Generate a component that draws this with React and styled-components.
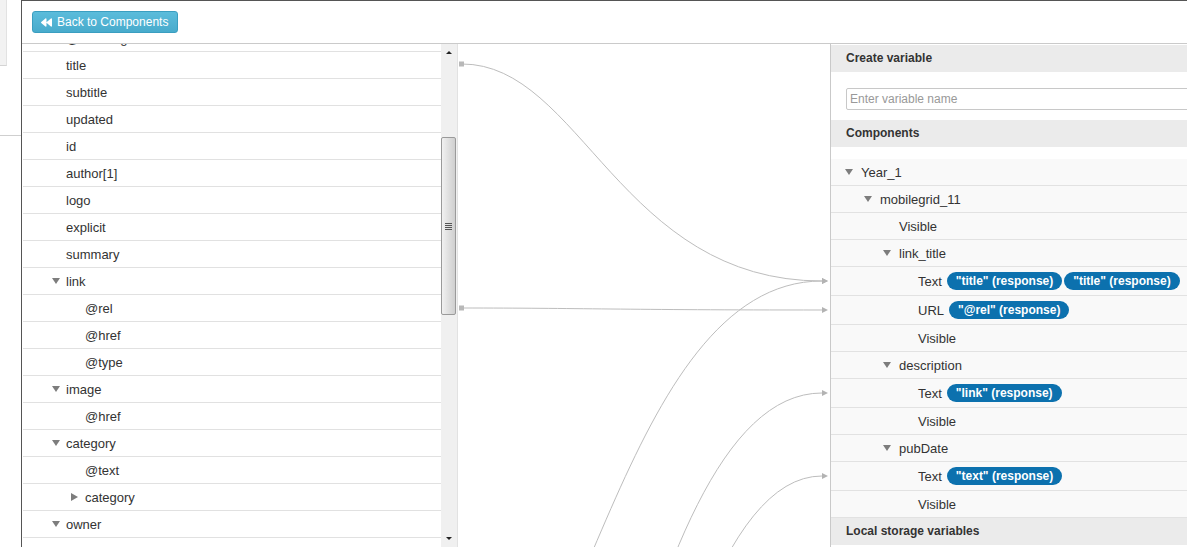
import React from 'react';
import styled, { createGlobalStyle } from 'styled-components';
import { FaBackward } from 'react-icons/fa';

const GlobalStyle = createGlobalStyle`
  html, body {
    margin: 0;
    padding: 0;
    background: #fff;
  }
  body {
    font-family: 'Liberation Sans', Arial, sans-serif;
    color: #333;
  }
  * { box-sizing: border-box; }
`;

const sourceRows = [
  { label: '@xml:lang', depth: 0 },
  { label: 'title', depth: 0 },
  { label: 'subtitle', depth: 0 },
  { label: 'updated', depth: 0 },
  { label: 'id', depth: 0 },
  { label: 'author[1]', depth: 0 },
  { label: 'logo', depth: 0 },
  { label: 'explicit', depth: 0 },
  { label: 'summary', depth: 0 },
  { label: 'link', depth: 0, toggle: 'down' },
  { label: '@rel', depth: 1 },
  { label: '@href', depth: 1 },
  { label: '@type', depth: 1 },
  { label: 'image', depth: 0, toggle: 'down' },
  { label: '@href', depth: 1 },
  { label: 'category', depth: 0, toggle: 'down' },
  { label: '@text', depth: 1 },
  { label: 'category', depth: 1, toggle: 'right' },
  { label: 'owner', depth: 0, toggle: 'down' },
  { label: 'name', depth: 1 },
];

const componentRows = [
  { label: 'Year_1', depth: 0, toggle: 'down' },
  { label: 'mobilegrid_11', depth: 1, toggle: 'down' },
  { label: 'Visible', depth: 2 },
  { label: 'link_title', depth: 2, toggle: 'down' },
  { label: 'Text', depth: 3, pills: ['"title" (response)', '"title" (response)'] },
  { label: 'URL', depth: 3, pills: ['"@rel" (response)'] },
  { label: 'Visible', depth: 3 },
  { label: 'description', depth: 2, toggle: 'down' },
  { label: 'Text', depth: 3, pills: ['"link" (response)'] },
  { label: 'Visible', depth: 3 },
  { label: 'pubDate', depth: 2, toggle: 'down' },
  { label: 'Text', depth: 3, pills: ['"text" (response)'] },
  { label: 'Visible', depth: 3 },
];

// connections in canvas coordinates (source y -> target y)
const links = [
  { from: 20, to: 237, marker: true },
  { from: 264, to: 266, marker: true },
  { from: 692, to: 237 },
  { from: 1064, to: 349 },
  { from: 1360, to: 432 },
];

const X0 = 4;
const X1 = 364;

const linkPath = (a, b) => {
  const dx = X1 - X0;
  const c1 = X0 + dx * 0.33;
  const c2 = X0 + dx * 0.44;
  return `M${X0} ${a} C${c1} ${a}, ${c2} ${b}, ${X1} ${b}`;
};

const Page = styled.div`
  display: flex;
  width: 1187px;
  height: 547px;
  overflow: hidden;
`;

const Backdrop = styled.div`
  flex: none;
  width: 21px;
  display: flex;
  flex-direction: column;
`;

const BackdropBlock = styled.div`
  width: 7px;
  height: 66px;
  background: #f2f2f2;
  border-right: 1px solid #e2e2e2;
  border-bottom: 1px solid #d4d4d4;
`;

const BackdropRule = styled.div`
  margin-top: 69px;
  border-top: 1px solid #cfcfcf;
`;

const Modal = styled.div`
  flex: none;
  width: 1209px;
  display: flex;
  flex-direction: column;
  border-left: 1px solid #555;
  border-top: 1px solid #555;
`;

const Header = styled.div`
  height: 42px;
  padding: 10px 0 0 10px;
  flex: none;
`;

const BackButton = styled.button`
  display: inline-flex;
  align-items: center;
  gap: 5px;
  height: 22px;
  width: 146px;
  padding: 0 0 0 8px;
  border: 1px solid #3a9ec0;
  border-radius: 3px;
  background: linear-gradient(#5bbcdb, #48abcc);
  color: #fff;
  font-family: 'Liberation Sans', Arial, sans-serif;
  font-size: 12px;
  cursor: pointer;
  svg {
    font-size: 11px;
  }
`;

const Body = styled.div`
  flex: 1;
  min-height: 0;
  display: flex;
  border-top: 1px solid #cacaca;
`;

const ListPane = styled.div`
  flex: none;
  width: 419px;
  overflow: hidden;
`;

const List = styled.div`
  margin-top: -19px;
`;

const ListRow = styled.div`
  display: flex;
  align-items: center;
  height: 27px;
  margin-left: 1px;
  padding-left: ${(p) => 29 + p.$depth * 19}px;
  border-bottom: 1px solid #e1e1e1;
  font-size: 13px;
  color: #333;
`;

const ToggleSlot = styled.span`
  flex: none;
  width: ${(p) => p.$w}px;
  display: flex;
  align-items: center;
`;

const Caret = styled.span`
  width: 0;
  height: 0;
  ${(p) =>
    p.$dir === 'right'
      ? `border-top: 4px solid transparent; border-bottom: 4px solid transparent; border-left: 7px solid #7d7d7d;`
      : `border-left: 4px solid transparent; border-right: 4px solid transparent; border-top: 6px solid #7d7d7d;`}
`;

const Scrollbar = styled.div`
  flex: none;
  width: 17px;
  display: flex;
  flex-direction: column;
  background: #f0f0f0;
  border-right: 1px solid #e2e2e2;
`;

const ScrollArrow = styled.div`
  flex: none;
  height: 17px;
  display: flex;
  align-items: center;
  justify-content: center;
  &::after {
    content: '';
    width: 0;
    height: 0;
    border-left: 3px solid transparent;
    border-right: 3px solid transparent;
    ${(p) => (p.$up ? 'border-bottom: 3px solid #222;' : 'border-top: 3px solid #222;')}
  }
`;

const ScrollTrack = styled.div`
  flex: 1;
  padding-top: 76px;
`;

const ScrollThumb = styled.div`
  height: 178px;
  margin: 0 1px 0 0;
  border: 1px solid #9a9a9a;
  border-radius: 2px;
  background: linear-gradient(90deg, #f1f1f1, #dcdcdc 60%, #cfcfcf);
  display: flex;
  align-items: center;
  justify-content: center;
`;

const Grip = styled.div`
  width: 7px;
  height: 7px;
  background: repeating-linear-gradient(#555 0 1px, transparent 1px 2px);
`;

const Canvas = styled.div`
  flex: 1;
  position: relative;
  overflow: hidden;
  background: #fff;
  svg {
    position: absolute;
    left: 0;
    top: 0;
  }
`;

const RightPanel = styled.div`
  flex: none;
  width: 400px;
  padding-top: 1px;
  border-left: 1px solid #c9c9c9;
  display: flex;
  flex-direction: column;
`;

const PanelHeader = styled.div`
  height: 27px;
  line-height: 27px;
  padding-left: 15px;
  background: #ebebeb;
  font-size: 12px;
  font-weight: bold;
  color: #333;
  flex: none;
`;

const InputWrap = styled.div`
  padding: 16px 15px 10px 15px;
`;

const VarInput = styled.input`
  width: 100%;
  height: 22px;
  padding: 0 3px;
  border: 1px solid #c8c8c8;
  border-radius: 2px;
  font-family: 'Liberation Sans', Arial, sans-serif;
  font-size: 12px;
  color: #333;
  &::placeholder {
    color: #999;
  }
`;

const Tree = styled.div`
  padding-top: 12px;
`;

const TreeRow = styled.div`
  display: flex;
  align-items: center;
  height: ${(p) => (p.$tall ? 29 : 27)}px;
  padding-left: ${(p) => 14 + p.$depth * 19}px;
  background: #f9f9f9;
  border-bottom: 1px solid #e2e2e2;
  font-size: 13px;
  color: #333;
  white-space: nowrap;
`;

const Pills = styled.span`
  display: inline-flex;
  gap: 2px;
  margin-left: 5px;
`;

const Pill = styled.span`
  display: inline-flex;
  align-items: center;
  height: 18px;
  padding: 0 9px;
  border-radius: 9px;
  background: #0c71ae;
  color: #fff;
  font-size: 12px;
  font-weight: bold;
`;

export default function App() {
  return (
    <>
      <GlobalStyle />
      <Page>
        <Backdrop>
          <BackdropBlock />
          <BackdropRule />
        </Backdrop>
        <Modal>
          <Header>
            <BackButton type='button'>
              <FaBackward />
              Back to Components
            </BackButton>
          </Header>
          <Body>
            <ListPane>
              <List>
                {sourceRows.map((r, i) => (
                  <ListRow key={i} $depth={r.depth}>
                    <ToggleSlot $w={14}>{r.toggle && <Caret $dir={r.toggle} />}</ToggleSlot>
                    {r.label}
                  </ListRow>
                ))}
              </List>
            </ListPane>
            <Scrollbar>
              <ScrollArrow $up />
              <ScrollTrack>
                <ScrollThumb>
                  <Grip />
                </ScrollThumb>
              </ScrollTrack>
              <ScrollArrow />
            </Scrollbar>
            <Canvas>
              <svg width='372' height='503' viewBox='0 0 372 503'>
                {links.map((l, i) => (
                  <g key={i}>
                    <path d={linkPath(l.from, l.to)} fill='none' stroke='#bdbdbd' strokeWidth='1' />
                    <polygon
                      points={`${X1} ${l.to - 3}, ${X1 + 6} ${l.to}, ${X1} ${l.to + 3}`}
                      fill='#b3b3b3'
                    />
                    {l.marker && <rect x='1' y={l.from - 2.5} width='5' height='5' fill='#b8b8b8' />}
                  </g>
                ))}
              </svg>
            </Canvas>
            <RightPanel>
              <PanelHeader>Create variable</PanelHeader>
              <InputWrap>
                <VarInput placeholder='Enter variable name' />
              </InputWrap>
              <PanelHeader>Components</PanelHeader>
              <Tree>
                {componentRows.map((r, i) => (
                  <TreeRow key={i} $depth={r.depth} $tall={!!r.pills}>
                    <ToggleSlot $w={16}>{r.toggle && <Caret $dir={r.toggle} />}</ToggleSlot>
                    {r.label}
                    {r.pills && (
                      <Pills>
                        {r.pills.map((p, j) => (
                          <Pill key={j}>{p}</Pill>
                        ))}
                      </Pills>
                    )}
                  </TreeRow>
                ))}
              </Tree>
              <PanelHeader>Local storage variables</PanelHeader>
            </RightPanel>
          </Body>
        </Modal>
      </Page>
    </>
  );
}
